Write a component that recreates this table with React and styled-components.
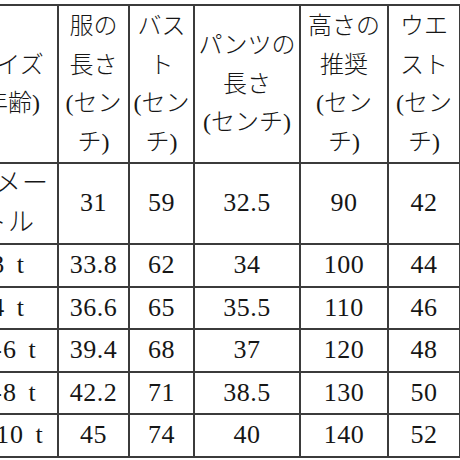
import React from 'react'
import styled, { createGlobalStyle } from 'styled-components'

const GlobalStyle = createGlobalStyle`
    html, body {
        margin: 0;
        padding: 0;
        background: #fff;
    }
`

const Frame = styled.div`
    width: 460px;
    height: 460px;
    overflow: hidden;
    background: #fff;
`

const SizeTable = styled.table`
    margin: 4px 0 0 -43px;
    width: 502px;
    table-layout: fixed;
    border-collapse: collapse;
    font-family: "Liberation Serif", "Noto Sans CJK JP", serif;
    color: #161616;
`

const HeadCell = styled.th`
    border: 2px solid #3b3b3b;
    padding: 1px 2px;
    font-size: 24px;
    font-weight: 300;
    line-height: 38.5px;
    text-align: center;
    vertical-align: middle;
`

const Part = styled.span`
    display: block;
`

const Cell = styled.td`
    border: 2px solid #3b3b3b;
    padding: 1px 2px;
    font-size: 26px;
    font-weight: 300;
    line-height: 38.5px;
    text-align: center;
    vertical-align: middle;
    letter-spacing: ${p => (p.$size ? '1px' : '0.5px')};
    word-spacing: ${p => (p.$size ? '4px' : '0')};
`

const columns = [
    { name: 'サイズ', unit: '(年齢)', width: 100 },
    { name: '服の長さ', unit: '(センチ)', width: 71 },
    { name: 'バスト', unit: '(センチ)', width: 65 },
    { name: 'パンツの長さ', unit: '(センチ)', width: 106 },
    { name: '高さの推奨', unit: '(センチ)', width: 88 },
    { name: 'ウエスト', unit: '(センチ)', width: 72 },
]

const rows = [
    ['18メートル', '31', '59', '32.5', '90', '42'],
    ['3 t', '33.8', '62', '34', '100', '44'],
    ['4 t', '36.6', '65', '35.5', '110', '46'],
    ['5-6 t', '39.4', '68', '37', '120', '48'],
    ['7-8 t', '42.2', '71', '38.5', '130', '50'],
    ['9-10 t', '45', '74', '40', '140', '52'],
]

export default function App() {
    return (
        <Frame>
            <GlobalStyle />
            <SizeTable>
                <colgroup>
                    {columns.map(c => <col key={c.name} style={{ width: c.width }} />)}
                </colgroup>
                <thead>
                    <tr>
                        {columns.map(c => (
                            <HeadCell key={c.name}>
                                <Part>{c.name}</Part>
                                <Part>{c.unit}</Part>
                            </HeadCell>
                        ))}
                    </tr>
                </thead>
                <tbody>
                    {rows.map(row => (
                        <tr key={row[0]}>
                            {row.map((value, i) => (
                                <Cell key={i} $size={i === 0}>{value}</Cell>
                            ))}
                        </tr>
                    ))}
                </tbody>
            </SizeTable>
        </Frame>
    )
}
